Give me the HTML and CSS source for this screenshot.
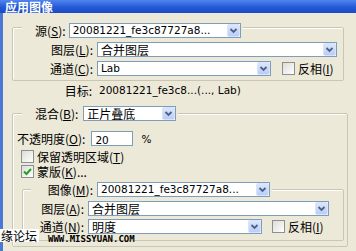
FILE: index.html
```html
<!DOCTYPE html>
<html>
<head>
<meta charset="utf-8">
<title>应用图像</title>
<link rel="stylesheet" href="styles.css">
</head>
<body>
<div class="title">应用图像</div>
<div class="dlg">
    <!--源-->
    <div class="group g1">
        <div class="head h1">
            <span class="lbl">源(<u>S</u>):</span>
            <div class="combo w-src"><span class="en">20081221_fe3c87727a8...</span><i class="arr"><svg width="13" height="13" viewBox="0 0 13 13"><polyline points="3.5,5 6.5,8 9.5,5" fill="none" stroke="#4d6185" stroke-width="1.8"/></svg></i></div>
        </div>
        <div class="row">
            <span class="lbl col1">图层(<u>L</u>):</span>
            <div class="combo w-layer"><span>合并图层</span><i class="arr"><svg width="13" height="13" viewBox="0 0 13 13"><polyline points="3.5,5 6.5,8 9.5,5" fill="none" stroke="#4d6185" stroke-width="1.8"/></svg></i></div>
        </div>
        <div class="row">
            <span class="lbl col1">通道(<u>C</u>):</span>
            <div class="combo w-chan"><span class="en">Lab</span><i class="arr"><svg width="13" height="13" viewBox="0 0 13 13"><polyline points="3.5,5 6.5,8 9.5,5" fill="none" stroke="#4d6185" stroke-width="1.8"/></svg></i></div>
            <span class="chk c-inv1"></span><span class="lbl">反相(<u>I</u>)</span>
        </div>
    </div>
    <!--目标-->
    <div class="target">
        <span class="lbl col1">目标:</span>
        <span class="en tval">20081221_fe3c8...(..., Lab)</span>
    </div>
    <!--混合-->
    <div class="group g2">
        <div class="head h2">
            <span class="lbl">混合(<u>B</u>):</span>
            <div class="combo w-blend"><span>正片叠底</span><i class="arr"><svg width="13" height="13" viewBox="0 0 13 13"><polyline points="3.5,5 6.5,8 9.5,5" fill="none" stroke="#4d6185" stroke-width="1.8"/></svg></i></div>
        </div>
        <div class="row opac">
            <span class="lbl">不透明度(<u>O</u>):</span>
            <div class="input"><span class="en">20</span></div>
            <span class="en pct">%</span>
        </div>
        <div class="row crow r-keep">
            <span class="chk"></span><span class="lbl">保留透明区域(<u>T</u>)</span>
        </div>
        <div class="row crow r-mask">
            <span class="chk on"><svg width="11" height="11" viewBox="0 0 11 11"><polyline points="2,5.5 4.5,8 9,3" fill="none" stroke="#21a121" stroke-width="2"/></svg></span><span class="lbl">蒙版(<u>K</u>)...</span>
        </div>
        <!--蒙版-->
        <div class="group g3">
            <div class="head h3">
                <span class="lbl col3h">图像(<u>M</u>):</span>
                <div class="combo w-img"><span class="en">20081221_fe3c87727a8...</span><i class="arr"><svg width="13" height="13" viewBox="0 0 13 13"><polyline points="3.5,5 6.5,8 9.5,5" fill="none" stroke="#4d6185" stroke-width="1.8"/></svg></i></div>
            </div>
            <div class="row">
                <span class="lbl col3">图层(<u>A</u>):</span>
                <div class="combo w-layer2"><span>合并图层</span><i class="arr"><svg width="13" height="13" viewBox="0 0 13 13"><polyline points="3.5,5 6.5,8 9.5,5" fill="none" stroke="#4d6185" stroke-width="1.8"/></svg></i></div>
            </div>
            <div class="row r-n">
                <span class="lbl col3">通道(<u>N</u>):</span>
                <div class="combo w-chan"><span>明度</span><i class="arr"><svg width="13" height="13" viewBox="0 0 13 13"><polyline points="3.5,5 6.5,8 9.5,5" fill="none" stroke="#4d6185" stroke-width="1.8"/></svg></i></div>
                <span class="chk c-inv2"></span><span class="lbl">反相(<u>I</u>)</span>
            </div>
        </div>
    </div>
</div>
<!--水印-->
<div class="wm">缘论坛</div>
<div class="wm-url">WWW.MISSYUAN.COM</div>
</body>
</html>
```

FILE: styles.css
```css
/*基本*/
body{margin:0; width:356px; height:251px; overflow:hidden; background:#ece9d8; color:#000; font:12px "Noto Sans CJK SC", sans-serif; position:relative;}
u{text-decoration:underline;}
.en{font-family:"DejaVu Sans", sans-serif; font-size:10.5px;}
/*标题栏*/
.title{height:13px; line-height:13px; padding-left:5px; color:#fff; font-weight:bold; font-size:12px; background:linear-gradient(#4f86ee,#2459d8 55%,#1b4ac2); overflow:hidden;}
.dlg{border-left:3px solid #4b78d4; height:238px; padding:14px 0 0 9px; box-sizing:border-box;}
/*分组框*/
.group{border:1px solid #c9c6b6; border-radius:2px; box-sizing:border-box; box-shadow:inset 1px 1px 0 #fff;}
.head{display:flex; align-items:center; height:15px; width:fit-content; background:#ece9d8; padding:0 2px 0 13px;}
.row{display:flex; align-items:center; height:15px; margin-top:4px;}
.lbl{white-space:nowrap; line-height:13px;}
.col1{width:80px; text-align:right; margin-right:4px;}
.g1{width:332px; padding-bottom:4px;}
.h1{margin:-5px 0 0 9px;}
.h1 .lbl{margin-right:3px;}
/*下拉框*/
.combo{display:flex; align-items:center; justify-content:space-between; height:15px; box-sizing:border-box; border:1px solid #7f9db9; background:#fff; padding-left:3px; line-height:13px;}
.arr{display:block; width:13px; height:13px; box-sizing:border-box; border:1px solid #d9e4fb; border-radius:2px; background:linear-gradient(#dce6fd,#b9cdf7);}
.arr svg{display:block; margin:-1px;}
.w-src{width:172px;}
.w-layer{width:240px;}
.w-chan{width:174px;}
.w-blend{width:93px;}
.w-img{width:173px;}
.w-layer2{width:241px;}
/*目标*/
.target{display:flex; align-items:center; height:14px; margin-top:2px;}
.tval{margin-left:3px;}
/*混合*/
.g2{width:336px; margin-top:16px; padding-bottom:5px;}
.h2{margin:-8px 0 0 9px;}
.h2 .lbl{margin-right:5px;}
.opac{margin-top:10px; padding-left:4px;}
.opac .lbl{margin-right:6px;}
.input{width:42px; height:15px; box-sizing:border-box; border:1px solid #7f9db9; background:#fff; padding-left:3px; line-height:13px;}
.pct{margin-left:8px;}
.crow{height:13px; padding-left:8px;}
.r-keep{margin-top:4px;}
.r-mask{margin-top:2px;}
.chk{display:block; width:13px; height:13px; box-sizing:border-box; border:1px solid #8e8f8f; background:linear-gradient(135deg,#dcdcd7,#fff); margin-right:3px; flex:none;}
.chk svg{display:block;}
.c-inv1{margin-left:11px;}
.c-inv2{margin-left:10px;}
/*蒙版分组*/
.g3{width:322px; margin:11px 0 0 9px; padding-bottom:6px;}
.h3{margin:-8px 0 0 8px; padding-left:0;}
.col3h{width:62px; text-align:right; margin-right:4px;}
.col3{width:61px; text-align:right; margin-right:4px;}
.r-n{margin-top:3px;}
/*水印*/
.wm{position:absolute; left:0; top:229px; height:13px; line-height:13px; padding:0 2px 0 1px; background:#fff; font-size:12px;}
.wm-url{position:absolute; left:48px; top:235px; font:bold 9px/8px "DejaVu Sans Mono", monospace;}
```
